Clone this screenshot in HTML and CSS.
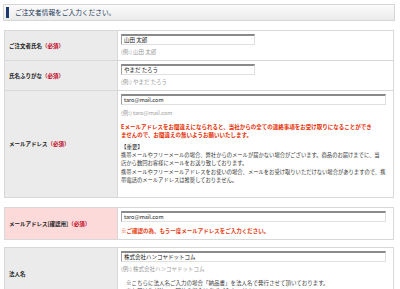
FILE: index.html
```html
<!DOCTYPE html>
<html lang="ja">

<head>
    <meta charset="UTF-8">
    <title>ご注文者情報</title>
    <link rel="stylesheet" href="styles.css">
</head>

<body>
    <div class="section-title">
        <h2>ご注文者情報をご入力ください。</h2>
    </div>

    <table class="form-table">
        <tr>
            <th>ご注文者氏名<span class="required">（必須）</span></th>
            <td>
                <input type="text" class="text-input" value="山田 太郎">
                <p class="example">(例:) 山田 太郎</p>
            </td>
        </tr>
        <tr>
            <th>氏名ふりがな<span class="required">（必須）</span></th>
            <td>
                <input type="text" class="text-input" value="やまだ たろう">
                <p class="example">(例:) やまだ たろう</p>
            </td>
        </tr>
        <tr>
            <th>メールアドレス<span class="required">（必須）</span></th>
            <td class="mail-cell">
                <input type="text" class="text-input wide" value="taro@mail.com">
                <p class="example">(例:) taro@mail.com</p>
                <p class="warning">Eメールアドレスをお間違えになられると、当社からの全ての連絡事項をお受け取りになることができ<br>ませんので、お間違えの無いようお願いいたします。</p>
                <p class="note-title">【重要】</p>
                <p class="note">携帯メールやフリーメールの場合、弊社からのメールが届かない場合がございます。商品のお届けまでに、当<br>店から数回お客様にメールをお送り致しております。<br>携帯メールやフリーメールアドレスをお使いの場合、メールをお受け取りいただけない場合がありますので、携<br>帯電話のメールアドレスは推奨しておりません。</p>
            </td>
        </tr>
    </table>

    <table class="form-table confirm">
        <tr>
            <th>メールアドレス[確認用]<span class="required">（必須）</span></th>
            <td>
                <input type="text" class="text-input wide" value="taro@mail.com">
                <p class="confirm-note">※ご確認の為、もう一度メールアドレスをご入力ください。</p>
            </td>
        </tr>
    </table>

    <table class="form-table company">
        <tr>
            <th>法人名</th>
            <td>
                <input type="text" class="text-input wide" value="株式会社ハンコヤドットコム">
                <p class="example">(例:) 株式会社ハンコヤドットコム</p>
                <p class="company-note">※こちらに法人名ご入力の場合「納品書」を法人名で発行させて頂いております。<br>※お届け先が法人・団体の場合は必ずご入力ください。</p>
            </td>
        </tr>
    </table>
</body>

</html>
```

FILE: styles.css
```css
body {
    margin: 0;
    padding: 4px 5px 0 3px;
    font-family: "Noto Sans CJK JP", sans-serif;
    font-size: 5.5px;
    color: #333;
    background: #fff;
}

p {
    margin: 0;
}

.section-title {
    height: 17px;
    box-sizing: border-box;
    display: flex;
    align-items: center;
    padding-left: 2px;
    border: 1px solid #d6d6d6;
    background: linear-gradient(#fbfbfb, #ebebeb);
}

.section-title h2 {
    margin: 0;
    font-size: 6.7px;
    font-weight: normal;
    line-height: 11px;
    color: #22375a;
    border-left: 3px solid #1c3a6e;
    padding-left: 6px;
}

.form-table {
    width: 390px;
    margin: 9px 1px 0 1px;
    border-collapse: collapse;
    border: 1px solid #d0d0d0;
}

.form-table th {
    width: 108px;
    padding: 0 0 0 4px;
    text-align: left;
    font-weight: bold;
    color: #222;
    background: #ebebeb;
    border: 1px solid #d8d8d8;
}

.form-table td {
    padding: 3px 3px 4px;
    vertical-align: top;
    border: 1px solid #d8d8d8;
}

.required {
    color: #c4001a;
}

.text-input {
    display: block;
    width: 134px;
    height: 11px;
    box-sizing: border-box;
    margin: 0;
    padding: 0 2px;
    font-family: "Noto Sans CJK JP", sans-serif;
    font-size: 5.5px;
    color: #111;
    background: #fff;
    border: 1px solid;
    border-top-width: 2px;
    border-color: #8a8a8a #e0e0e0 #e0e0e0 #a0a0a0;
    outline: none;
}

.text-input.wide {
    width: 265px;
}

.example {
    margin-top: 3px;
    line-height: 8px;
    color: #999;
}

.mail-cell {
    padding-top: 4px;
}

.mail-cell .example {
    margin-top: 4px;
}

.warning {
    margin-top: 6px;
    line-height: 8px;
    font-weight: bold;
    color: #e52b00;
    white-space: nowrap;
}

.note-title {
    margin-top: 4px;
    line-height: 8px;
    color: #222;
}

.note {
    line-height: 8.3px;
    margin-bottom: 9px;
    color: #333;
    white-space: nowrap;
    font-size: 5.3px;
}

.confirm th {
    background: #fddada;
}

.confirm-note {
    margin-top: 5px;
    line-height: 8px;
    font-weight: bold;
    color: #e8380d;
}

.company {
    margin-top: 7px;
}

.company th {
    vertical-align: middle;
}

.company-note {
    margin: 6px 0 0 5px;
    line-height: 8px;
    color: #444;
}
```
